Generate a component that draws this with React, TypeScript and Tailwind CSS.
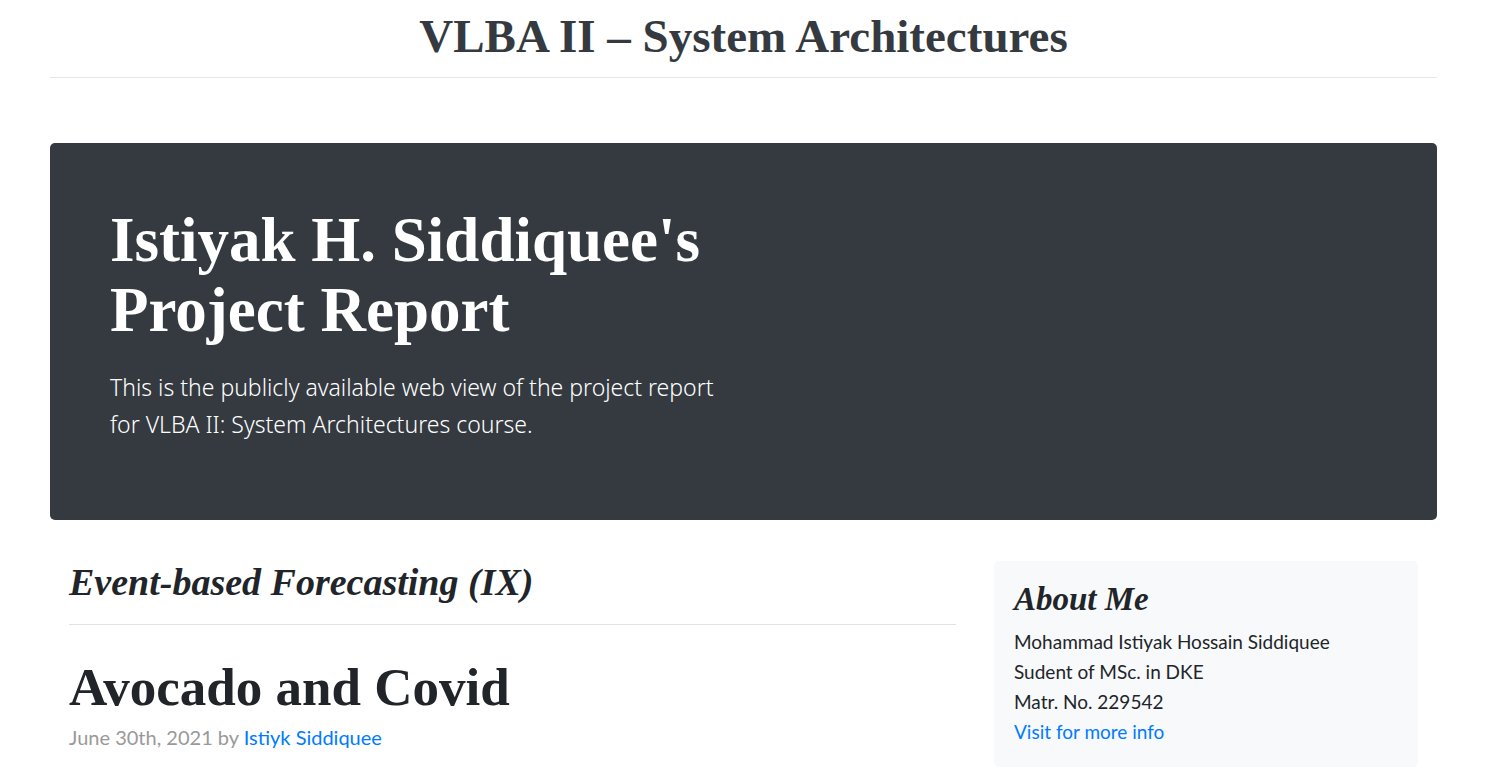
import React from "react";

const serif = "font-['Liberation_Serif',serif]";
const sans = "font-['Noto_Sans',sans-serif]";
const body = "font-['Lato',sans-serif]";

export default function App() {
    return (
        <div className={`min-h-screen bg-white text-[#212529] ${sans}`}>
            <div className="ml-[50px] w-[1387px]">
                {/* Header */}
                <header className="h-[78px] flex items-center justify-center border-b border-[#e5e5e5]">
                    <a className={`${serif} text-[47px] font-bold leading-none text-[#343a40] -mt-[5px]`}>
                        VLBA II – System Architectures
                    </a>
                </header>

                {/* Hero */}
                <div className="mt-[65px] h-[377px] rounded-[5px] bg-[#343a40] text-white px-[60px] pt-[62px]">
                    <h1 className={`${serif} text-[63px] font-bold leading-[70px] whitespace-nowrap`}>
                        Istiyak H. Siddiquee's
                        <br />
                        Project Report
                    </h1>
                    <p className="mt-[24px] text-[23px] font-light leading-[37px] whitespace-nowrap">
                        This is the publicly available web view of the project report
                        <br />
                        for VLBA II: System Architectures course.
                    </p>
                </div>

                {/* Main + sidebar */}
                <div className="mt-[41px] flex items-start">
                    <main className="ml-[19px] w-[887px]">
                        <h3 className={`${serif} italic font-bold text-[38px] leading-[42px] pb-[21px] border-b border-[#dee2e6]`}>
                            Event-based Forecasting (IX)
                        </h3>
                        <div className="mt-[32px]">
                            <h2 className={`${serif} font-bold text-[53px] leading-[60px] mb-[5px]`}>
                                Avocado and Covid
                            </h2>
                            <p className={`${body} text-[20px] leading-[30px] text-[#999]`}>
                                June 30th, 2021 by{" "}
                                <a className="text-[#007bff]">Istiyk Siddiquee</a>
                            </p>
                        </div>
                    </main>

                    <aside className="ml-[38px] w-[424px] bg-[#f8f9fa] rounded-[5px] p-[20px]">
                        <h4 className={`${serif} italic font-bold text-[33px] leading-[36px] mb-[10px]`}>
                            About Me
                        </h4>
                        <p className={`${body} text-[19px] leading-[30px]`}>
                            Mohammad Istiyak Hossain Siddiquee
                            <br />
                            Sudent of MSc. in DKE
                            <br />
                            Matr. No. 229542
                            <br />
                            <a className="text-[#007bff]">Visit for more info</a>
                        </p>
                    </aside>
                </div>
            </div>
        </div>
    );
}
